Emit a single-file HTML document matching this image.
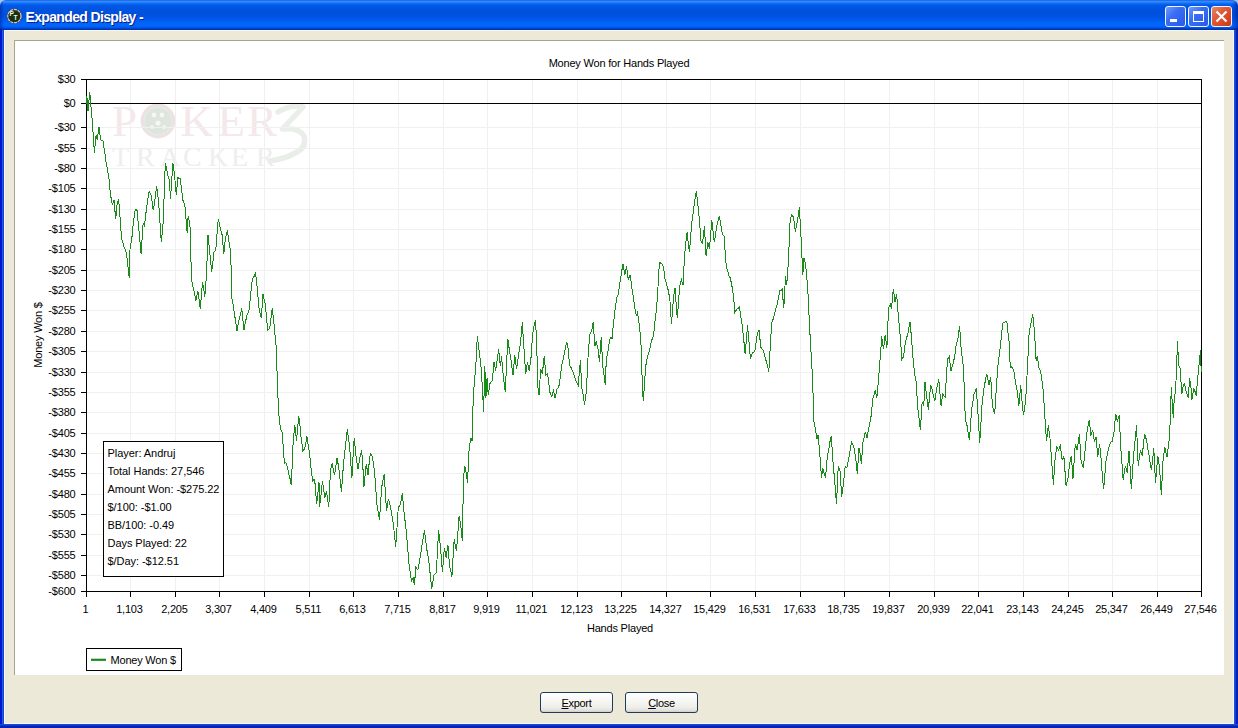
<!DOCTYPE html>
<html><head><meta charset="utf-8"><style>
html,body{margin:0;padding:0}
body{width:1238px;height:728px;overflow:hidden;position:relative;background:#ECE9D8;font-family:"Liberation Sans",sans-serif}
.abs{position:absolute}
#title{left:0;top:0;width:1238px;height:30px;border-radius:6px 6px 0 0;
background:linear-gradient(#0a49d6 0px,#3d8ffc 1px,#2b86ff 2px,#0d6ff6 3.5px,#005ae8 5px,#0054e0 9px,#0050dc 15px,#0058ea 19px,#0064f8 23px,#0066fb 26px,#0058ea 27.5px,#0042cc 28.5px,#00309e 30px)}
#bl{left:0;top:30px;width:4px;height:698px;background:linear-gradient(90deg,#0019cf 0,#0019cf 2px,#1e5bf5 2px,#1e5bf5 3px,#1747c4 3px)}
#br{left:1234px;top:30px;width:4px;height:698px;background:linear-gradient(90deg,#1a52e6 0,#1a52e6 1px,#0c40d8 1px,#0c40d8 2px,#0624b0 2px)}
#bb{left:0;top:724px;width:1238px;height:4px;background:linear-gradient(#1a48dc 0,#1a48dc 1px,#0a38cc 1px,#0a38cc 2px,#0624b0 2px)}
#hl{left:4px;top:30px;width:1230px;height:1px;background:#f6f7fc}
#panel{left:14px;top:40px;width:1210px;height:635px;background:#fff;box-shadow:inset 1px 1px 0 #a6a397}
#ttext{left:25.5px;top:9px;color:#fff;font-weight:bold;font-size:14px;letter-spacing:-0.65px;text-shadow:1px 1px 0 #0a1e8c;white-space:nowrap}
.tb{top:6px;width:21px;height:21px;box-sizing:border-box;border:1px solid #eef6ff;border-radius:3px}
#bmin{left:1165px;background:linear-gradient(135deg,#6f9cff 0%,#3a6cf4 40%,#2a5ae6 100%)}
#bmax{left:1188px;background:linear-gradient(135deg,#6f9cff 0%,#3a6cf4 40%,#2a5ae6 100%)}
#bcls{left:1211px;background:linear-gradient(135deg,#e8866a 0%,#e05a36 40%,#d84424 75%,#c23a1c 100%)}
.lbl text, text.lbl{font-family:"Liberation Sans",sans-serif;font-size:11px;fill:#000;letter-spacing:-0.2px}
.info text{letter-spacing:-0.05px}
.btn{top:692px;width:73px;height:21px;box-sizing:border-box;border:1px solid #1f3a5c;border-radius:3px;letter-spacing:-0.3px;
background:linear-gradient(#ffffff 0%,#f7f7f4 40%,#efeee9 75%,#e2e0d8 92%,#d0cdc3 100%);font-size:11px;text-align:center;line-height:21px;color:#000}
.btn u{text-decoration:underline;text-underline-offset:1px}
</style></head><body>
<div class="abs" style="left:0;top:0;width:1238px;height:8px;background:#aac0ee"></div><div id="title" class="abs"></div><div class="abs" style="left:0;top:0;width:1238px;height:30px;border-radius:6px 6px 0 0;background:linear-gradient(90deg,rgba(0,20,140,.45) 0,rgba(0,20,140,0) 4px,rgba(0,20,140,0) 1232px,rgba(0,20,140,.55) 1238px)"></div>
<div id="bl" class="abs"></div><div id="br" class="abs"></div><div id="bb" class="abs"></div>
<div id="hl" class="abs"></div><div class="abs" style="left:4px;top:30px;width:1px;height:694px;background:#f6f7fc"></div><div class="abs" style="left:1233px;top:30px;width:1px;height:694px;background:#f6f7fc"></div><div class="abs" style="left:4px;top:723px;width:1230px;height:1px;background:#f6f7fc"></div>
<div id="panel" class="abs"></div>
<svg class="abs" style="left:6px;top:8px" width="17" height="17" viewBox="0 0 17 17">
<circle cx="8.4" cy="8.1" r="7.4" fill="#3a3a30" />
<circle cx="8.4" cy="8.1" r="6.6" fill="none" stroke="#cfc6ba" stroke-width="1.3" stroke-dasharray="3 0.8"/>
<circle cx="8.4" cy="8.1" r="5.7" fill="#173012"/>
<text x="3.6" y="8.3" style="font-family:'Liberation Sans';font-weight:bold;font-size:6.6px;fill:#f4f4e4">P</text>
<text x="7.6" y="12.3" style="font-family:'Liberation Sans';font-weight:bold;font-size:6.6px;fill:#f4f4e4">T</text>
</svg>
<div id="ttext" class="abs">Expanded Display -</div>
<div id="bmin" class="abs tb"><div class="abs" style="left:4px;top:12px;width:7px;height:3px;background:#fff"></div></div>
<div id="bmax" class="abs tb"><div class="abs" style="left:4px;top:4px;width:11px;height:11px;box-sizing:border-box;border:1px solid #fff;border-top-width:3px"></div></div>
<div id="bcls" class="abs tb"><svg class="abs" style="left:0;top:0" width="19" height="19"><path d="M4.5 4.5L14.5 14.5M14.5 4.5L4.5 14.5" stroke="#fff" stroke-width="2.2"/></svg></div>
<svg class="abs" style="left:0;top:0" width="1238" height="728">
<g class="wm">
<text x="112" y="136" style="font-family:'Liberation Serif';font-size:45px;fill:#f5e8ea">P</text>
<circle cx="158" cy="121" r="16.2" fill="#e3e9e3" stroke="#f0e0e3" stroke-width="2.4"/>
<circle cx="158" cy="121" r="12.8" fill="#dde5dd"/>
<circle cx="154" cy="115" r="2.4" fill="#f4f7f4"/><circle cx="162" cy="115" r="2.4" fill="#f4f7f4"/><circle cx="158" cy="123" r="2.6" fill="#f4f7f4"/><circle cx="152" cy="127" r="1.9" fill="#f4f7f4"/><circle cx="164" cy="127" r="1.9" fill="#f4f7f4"/>
<text x="180.5" y="136" style="font-family:'Liberation Serif';font-size:45px;fill:#f5e8ea">K</text>
<text x="217.5" y="136" style="font-family:'Liberation Serif';font-size:45px;fill:#f5e8ea">E</text>
<text x="247" y="136" style="font-family:'Liberation Serif';font-size:45px;fill:#f5e8ea">R</text>
<g style="font-family:'Liberation Serif';font-size:28px;fill:#eeeeee">
<text x="112" y="166">T</text><text x="136" y="166">R</text><text x="160" y="166">A</text><text x="183" y="166">C</text><text x="208" y="166">K</text><text x="231" y="166">E</text><text x="256" y="166">R</text>
</g>
<path d="M278 112 Q291 104 303 107 L282.5 129 Q299 127 304 136 Q307 147 297 152 Q285 159 270 161" fill="none" stroke="#e9eee9" stroke-width="5.5" stroke-linecap="round" stroke-linejoin="round"/>
</g>
<path d="M130.5 80V591M175.5 80V591M219.5 80V591M264.5 80V591M309.5 80V591M353.5 80V591M398.5 80V591M443.5 80V591M487.5 80V591M532.5 80V591M577.5 80V591M621.5 80V591M666.5 80V591M710.5 80V591M755.5 80V591M800.5 80V591M844.5 80V591M889.5 80V591M934.5 80V591M978.5 80V591M1023.5 80V591M1068.5 80V591M1112.5 80V591M1157.5 80V591M87 127.5H1201M87 148.5H1201M87 168.5H1201M87 188.5H1201M87 209.5H1201M87 229.5H1201M87 249.5H1201M87 270.5H1201M87 290.5H1201M87 310.5H1201M87 331.5H1201M87 351.5H1201M87 372.5H1201M87 392.5H1201M87 412.5H1201M87 433.5H1201M87 453.5H1201M87 473.5H1201M87 494.5H1201M87 514.5H1201M87 534.5H1201M87 555.5H1201M87 575.5H1201" stroke="#f0f0f0" stroke-width="1" fill="none"/>
<path d="M87 103.5H1201" stroke="#000" stroke-width="1"/>
<path d="M86.5 79V592M86 79.5H1202M1201.5 79V592M86 591.5H1202" stroke="#000" stroke-width="1" fill="none"/>
<path d="M81 79.5H86M81 103.5H86M81 127.5H86M81 148.5H86M81 168.5H86M81 188.5H86M81 209.5H86M81 229.5H86M81 249.5H86M81 270.5H86M81 290.5H86M81 310.5H86M81 331.5H86M81 351.5H86M81 372.5H86M81 392.5H86M81 412.5H86M81 433.5H86M81 453.5H86M81 473.5H86M81 494.5H86M81 514.5H86M81 534.5H86M81 555.5H86M81 575.5H86M81 591.5H86" stroke="#000" stroke-width="1"/>
<path d="M86.5 592V597M130.5 592V597M175.5 592V597M219.5 592V597M264.5 592V597M309.5 592V597M353.5 592V597M398.5 592V597M443.5 592V597M487.5 592V597M532.5 592V597M577.5 592V597M621.5 592V597M666.5 592V597M710.5 592V597M755.5 592V597M800.5 592V597M844.5 592V597M889.5 592V597M934.5 592V597M978.5 592V597M1023.5 592V597M1068.5 592V597M1112.5 592V597M1157.5 592V597M1201.5 592V597" stroke="#000" stroke-width="1"/>
<g class="lbl"><text x="75.5" y="83.3" text-anchor="end">$30</text><text x="75.5" y="107.3" text-anchor="end">$0</text><text x="75.5" y="131.3" text-anchor="end">-$30</text><text x="75.5" y="152.3" text-anchor="end">-$55</text><text x="75.5" y="172.3" text-anchor="end">-$80</text><text x="75.5" y="192.3" text-anchor="end">-$105</text><text x="75.5" y="213.3" text-anchor="end">-$130</text><text x="75.5" y="233.3" text-anchor="end">-$155</text><text x="75.5" y="253.3" text-anchor="end">-$180</text><text x="75.5" y="274.3" text-anchor="end">-$205</text><text x="75.5" y="294.3" text-anchor="end">-$230</text><text x="75.5" y="314.3" text-anchor="end">-$255</text><text x="75.5" y="335.3" text-anchor="end">-$280</text><text x="75.5" y="355.3" text-anchor="end">-$305</text><text x="75.5" y="376.3" text-anchor="end">-$330</text><text x="75.5" y="396.3" text-anchor="end">-$355</text><text x="75.5" y="416.3" text-anchor="end">-$380</text><text x="75.5" y="437.3" text-anchor="end">-$405</text><text x="75.5" y="457.3" text-anchor="end">-$430</text><text x="75.5" y="477.3" text-anchor="end">-$455</text><text x="75.5" y="498.3" text-anchor="end">-$480</text><text x="75.5" y="518.3" text-anchor="end">-$505</text><text x="75.5" y="538.3" text-anchor="end">-$530</text><text x="75.5" y="559.3" text-anchor="end">-$555</text><text x="75.5" y="579.3" text-anchor="end">-$580</text><text x="75.5" y="595.3" text-anchor="end">-$600</text></g>
<g class="lbl"><text x="85.4" y="612.5" text-anchor="middle">1</text><text x="129.4" y="612.5" text-anchor="middle">1,103</text><text x="174.4" y="612.5" text-anchor="middle">2,205</text><text x="218.4" y="612.5" text-anchor="middle">3,307</text><text x="263.4" y="612.5" text-anchor="middle">4,409</text><text x="308.4" y="612.5" text-anchor="middle">5,511</text><text x="352.4" y="612.5" text-anchor="middle">6,613</text><text x="397.4" y="612.5" text-anchor="middle">7,715</text><text x="442.4" y="612.5" text-anchor="middle">8,817</text><text x="486.4" y="612.5" text-anchor="middle">9,919</text><text x="531.4" y="612.5" text-anchor="middle">11,021</text><text x="576.4" y="612.5" text-anchor="middle">12,123</text><text x="620.4" y="612.5" text-anchor="middle">13,225</text><text x="665.4" y="612.5" text-anchor="middle">14,327</text><text x="709.4" y="612.5" text-anchor="middle">15,429</text><text x="754.4" y="612.5" text-anchor="middle">16,531</text><text x="799.4" y="612.5" text-anchor="middle">17,633</text><text x="843.4" y="612.5" text-anchor="middle">18,735</text><text x="888.4" y="612.5" text-anchor="middle">19,837</text><text x="933.4" y="612.5" text-anchor="middle">20,939</text><text x="977.4" y="612.5" text-anchor="middle">22,041</text><text x="1022.4" y="612.5" text-anchor="middle">23,143</text><text x="1067.4" y="612.5" text-anchor="middle">24,245</text><text x="1111.4" y="612.5" text-anchor="middle">25,347</text><text x="1156.4" y="612.5" text-anchor="middle">26,449</text><text x="1200.4" y="612.5" text-anchor="middle">27,546</text></g>
<path d="M86.3 103.7 86.9 96.5 88 111 89.8 92.2 90.9 105.2 92.6 125.4 94.4 152.7 96.1 135.4 97.3 139.8 99 126.8 100.7 139.8 101.8 140.2 103 141.2 104.8 152.7 105.9 161.4 107.3 168.5 108.8 177.2 110.5 194.5 112.2 204.6 114 200.3 115.7 219 117.2 203.2 118.6 198.9 120.3 220.5 121.5 237.8 123 243.2 124.4 247.9 125.6 250.5 126.7 255.1 128 266.7 129.3 278.1 130.1 246.4 131.6 240.7 132.6 230.3 133.6 220.5 135.3 209 137 210.4 138.8 229.1 139.9 240.3 141.1 253.6 142.1 238.5 143.1 223.4 144.5 226.3 145.7 215.1 146.8 206.1 147.9 198.7 149.1 191.7 150.9 194.5 152.1 201.4 153.2 210.4 154.9 200.3 156.6 185.9 157.8 195 158.9 206.1 160.1 223.9 161.3 242.1 162.3 232.1 163.3 220.5 164.3 190.7 165.3 162.8 166.4 167.9 167.6 174.4 169.3 180.1 170.5 198.9 171.7 181.2 172.8 162.8 174.5 174.4 176.2 194.5 178 177.2 179.2 178.6 180.3 178.7 181.6 189.6 182.9 200.2 184.1 203.6 185.2 207.4 186.2 221.5 187.2 233.3 188.1 216 189.1 220.7 190.1 227.6 191.5 279.5 192.6 285.8 193.7 289.8 194.8 294.8 195.9 301.1 196.9 295.1 197.9 291 199.1 299.6 200.2 309.1 201.3 296.5 202.5 282.3 203.7 288.7 204.8 296.7 206.5 275.1 208 234.8 209 245.1 210 255 211.7 272.2 212.8 262.5 214 252.1 215.7 250.6 217 234.4 218.3 218.9 219.4 224.1 220.4 229 222.1 234.8 223.8 253.5 225.5 237.7 227.3 230.4 229 242 230.7 252.1 231.9 298.2 233.1 304.4 234.2 312.6 235.6 320.9 237.1 331.3 238.2 324.1 239.4 318.4 240.6 313.8 241.7 308.3 242.8 318.9 244 329.9 245.4 322.3 246.9 315.5 248.1 312.8 249.2 309.7 250.6 295.2 252.1 280.9 253.2 277.5 254.4 275.8 255.5 272.2 257.3 288.1 258.3 300.1 259.3 311.2 260.3 314.2 261.3 318.4 263 293.9 264.1 299.1 265.3 304 266.5 317 267.6 329.9 268.8 329.2 269.9 327 271 318.2 272.2 308.3 273.4 318.6 274.6 329.9 275.6 341.2 276.6 350.1 277.2 380 278.6 411.7 280.4 429 282.1 431.9 283.2 446.8 284.4 463.6 285.9 462.2 286.9 465.6 287.9 469.4 289 475.3 290.2 479.1 291.3 485.2 293.1 443.4 294.8 424.7 296.5 440.5 297.6 428.2 298.8 416 300 425.7 301.1 437.7 302.9 450.6 304.6 449.2 305.8 443.1 306.9 436.2 307.9 443.3 308.9 449.2 310.2 459.9 311.4 471.2 312.7 480.9 313.7 479.9 314.7 479.5 315.7 492.2 316.7 504 317.9 493.4 319 482.3 319.6 506.8 321.1 494 322.5 480.9 323.6 489.4 324.8 498.2 326.5 491 327.6 499.7 328.8 506.8 330.5 469.4 332.3 463.6 333.5 470.4 334.6 475.1 335.8 466.4 336.9 457.8 338.6 466.5 340.1 479.8 341.5 492.4 342.6 475.5 343.8 460.7 345 450.6 346.1 439.9 347.3 429 348.5 438.8 349.6 446.3 350.8 462.9 351.9 478 353 457.3 354.2 437.7 355.9 455 356.9 461.9 357.9 469.4 358.9 464 359.9 457.8 361.7 450.6 362.9 467.5 364 486.7 365.1 475.1 366.3 463.6 368 475.1 369.1 463.5 370.3 453.5 371.5 454.7 372.6 457.8 373.8 466.1 374.9 476.6 376 492.3 377.2 506.8 378.4 512.4 379.5 519.8 380.6 502.6 381.8 486.7 383 479.9 384.2 473.7 385.4 493.3 386.5 511.2 388.2 499.6 389.4 502.2 390.5 506.8 391.9 515.3 393.4 524.1 394.5 535.5 395.7 546.6 397 527.6 398.3 506.8 399.3 506.1 400.3 504 401.3 499.4 402.3 493 404 511.7 405.1 521.3 406.3 531.9 407.8 549 409.2 566.5 410.4 573.4 411.5 580.9 413.3 578 414.4 585.2 415.9 566.5 416.9 568.8 417.9 569.4 419.6 560.7 420.6 555.3 421.6 547.8 423.1 538.3 424.5 530.5 425.5 538.4 426.5 547.8 427.6 553.6 428.8 560.7 430.2 574.2 431.7 589 432.9 582 434 575.1 435.1 573.9 436.3 572.3 437.5 550.8 438.6 530.5 440.4 546.3 441.4 558.1 442.4 572.3 443.4 559.9 444.4 547.8 446.1 557.8 447.9 544.9 449.6 566.5 450.8 571.2 451.9 576.6 453 558 454.2 539.1 455.4 545.9 456.5 550.6 457.8 533.8 459.1 516 460.5 523.3 462.3 540.5 463.5 478.7 464.6 465.8 466.3 473 467.5 483 469.2 447 471 438.4 472.1 441.2 473.3 395.1 475 374.9 476.1 360.5 477.3 336 479 350.4 480.8 363.4 482.5 389.4 483.6 412.4 484.8 366.3 485.9 398 487.1 377.8 488.2 395.1 490 383.6 491.1 382.2 492.3 380.7 494 362 495.7 370.6 497.5 357.7 498.6 349 500.4 366.3 501.5 356.2 503.2 375 504.2 383.9 505.3 392.2 506.7 360.5 507.9 338.9 509.6 351.9 511.3 362 513 375 514.8 354.8 516.5 369.2 517.6 361.7 518.8 353.3 520.5 343.2 522.3 322.5 524 349 525.7 373.5 527.5 362 529.2 370.6 530.9 359.1 532.6 334.6 534 326.3 535.5 320.2 536.7 343.2 537.8 386.5 539 395.1 540.7 369.2 542.4 373.5 544.2 356.2 545.9 375 547.6 373.5 548.8 383.8 549.9 392.2 551.7 396.6 553.4 390.8 555.1 398 556.9 389.4 558 387.9 559.2 385 560.4 376.5 561.5 366.3 562.6 362 563.8 356.2 565.2 348.7 566.7 341.8 568.4 350.4 569.5 364.9 571 367.5 572.4 370.6 573.8 374 575.3 379.3 576.8 382.5 578.2 385 579.4 371.7 580.5 360.5 581.6 386.5 583.4 396.6 584.5 405.2 586.3 392.2 588 357.7 589.7 334.6 591.4 331.7 593.2 322.5 594.9 346.1 596.1 341.8 597.8 347.6 599.5 362 601.2 337.5 602.9 367.4 604 375 605.2 384.7 606.3 360.2 608.1 350.1 609.2 342.9 610.4 337.1 612.1 338.5 613.2 326.2 614.4 315.5 615.5 306.5 616.7 298.2 618.4 293.9 620.2 280.9 621.7 271.2 623.1 263.6 624.8 275.1 626.5 266.5 628.2 279.5 630 275.1 631.1 281.9 632.3 291 633.5 298.1 634.6 306.8 636.3 315.5 637.5 312.6 639.2 324.1 640.9 341.4 642.3 384 643.2 400.5 644.5 385 645.5 367.4 646.7 360.6 647.9 355.8 649.6 350.1 651.3 341.4 652.5 338.2 653.6 335.7 655 321.6 656.5 309.7 658 286.8 659.4 262.2 660.5 263.1 661.7 263.6 663.4 266.5 665.1 279.5 666.5 283.7 668 289.5 669.8 298.2 671.5 324.1 672.6 309.1 673.8 295.3 675 288.1 676.1 302.9 677.3 318.4 678.5 302.2 679.6 286.7 681.3 279.5 683 285.2 684.1 264.8 685.3 246.3 687.1 231.9 688.2 242.8 689.4 252.1 690.5 238.8 691.7 223.2 692.9 214.5 694 205.9 695.1 198.7 696.3 191.5 697.5 200.6 698.6 211.7 699.8 225.1 700.9 240.5 702.6 243.4 704.4 226.1 706.1 256.4 707.8 242 709.5 249.2 710.6 234.4 711.8 220.4 713 230.6 714.2 242 715.4 235.6 716.5 227.6 717.9 221 719.3 216 720.5 222.1 721.6 230.4 722.8 234.4 724 236.2 725.1 251.4 726.3 266.5 727.5 270 728.6 275.1 730.3 278 731.5 283.9 732.6 289.5 733.8 299.9 734.9 312.6 736 310.5 737.2 308.3 738.4 308.3 739.5 306.8 740.9 317 742.3 325.5 743.8 340.4 745.2 354.3 746.4 339.3 747.5 325.5 749 341.7 750.4 358.6 751.5 355 752.7 352.9 753.9 352 755 350 756.1 342.1 757.3 334.1 759 329.8 760.8 347.1 762 349.1 763.1 350 764.5 354.6 765.9 360.1 767.3 365.2 768.8 371.6 770.2 347.8 771.7 322.6 772.9 319.9 774 315.8 775.2 311.1 776.9 305.3 778.3 298.8 779.8 290.9 781 290.7 782.1 289.5 783.8 308.2 785.5 276.5 786.7 285.1 788.4 262.1 790.2 218.8 791.9 214.5 793.6 217.4 795.3 231.8 796.5 225.9 797.7 218.8 799.4 207.3 801.1 239 802.8 275 804 257.7 805.7 265 806.9 278.7 808 293.8 809.1 316.9 810.3 339.9 811.5 359.8 812.6 380.3 814 421.9 815.2 427.7 816.9 439.2 818.1 434.9 819.8 453.6 821.5 478.1 822.7 468 823.8 472.3 825.6 478.1 826.7 462.2 827.9 453.9 829 447.8 830.1 440.9 831.3 436.3 833 462.2 834.8 482.4 836.5 504 838.2 466.6 840 470.9 841.7 496.8 843.4 483.9 845.2 466.6 846.9 468 848 461.7 849.2 456.5 850.4 448.7 851.5 442.1 852.6 444.7 853.8 446.4 855.5 456.5 857.3 473.8 859 447.8 860.1 453.6 861.3 463.7 863 442.1 864.1 438.1 865.3 432 867.1 437.7 868.8 427.7 870 421.8 871.1 416.1 872.8 398.8 874 395.5 875.1 390.2 876.9 397.4 878.6 378.6 879.6 365.7 880.7 351.5 881.7 336.3 883.5 349.3 885.2 334.9 886.9 347.8 888.6 307.5 890.4 304.6 891.5 308.9 893.3 288.7 895 301.7 896.7 294.5 897.9 310.4 899 323 900.2 336.3 901.9 359.4 903.6 356.5 905.4 342.1 906.5 337.8 907.7 334.9 908.9 327.7 910 321.9 911.1 333.4 912.9 356.5 914.6 373.8 916.3 382.4 917.5 405.5 918.6 414.1 920.4 430 922.1 402.6 923.8 405.5 925 382.4 926.7 396.8 928.4 409.8 929.5 396.8 930.7 385.3 931.9 388.9 933 394 934.8 401.2 936.5 389.6 937.6 384.8 938.8 379.5 940 393.5 941.1 405.5 942.8 394 944 396.1 945.1 396.8 946.3 378.1 947.5 359.4 949.2 356.5 950.9 370.9 952.3 366.2 953.8 360.8 955 353.6 956.1 345 957.8 339.2 959.6 326.2 961.3 350.7 962.5 359.1 963.6 369.5 965.3 419.9 967.1 425.7 968.2 433.3 969.4 440.1 970.5 425.2 971.7 408.4 972.9 401.9 974 394 975.1 391.7 976.3 388.2 978 414.1 979.7 443 980.9 424.2 982 405.5 983.2 394.6 984.4 385.3 985.5 380.2 986.7 373.8 987.9 379.1 989 385.3 990.7 376.7 992.4 405.5 993.5 410.5 994.7 414.1 996.5 385.3 998.2 362.2 999.4 354.7 1000.5 345 1001.6 333.9 1002.8 323.3 1004 322.5 1005.1 321.9 1006.8 321.3 1008 332.8 1009.1 342.1 1010.3 368 1012 366.6 1013.8 370.9 1015.5 382.4 1017.2 391.1 1018.9 405.5 1020.7 385.3 1021.7 398 1023.5 415.3 1024.7 407.2 1025.8 398 1027.5 366.3 1029.2 331.7 1031 323.1 1032.7 314.4 1034.4 330.3 1036.1 360.5 1037.3 356.2 1039 367.7 1040.2 370.6 1041.3 375 1043.1 389.4 1044.8 415.3 1046.5 441.2 1048.3 425.4 1050 438.4 1051.7 461.4 1053.4 484.5 1055.2 457.1 1056.9 447 1058.6 449.9 1060.4 445.6 1062.1 460 1063.8 455.7 1064.9 469.9 1066.1 485.9 1067.9 478.7 1069.6 464.3 1071.3 455.7 1073 478.7 1074.2 460.6 1075.3 444.1 1077.1 449.9 1078.2 442.9 1079.4 434 1081.1 461.4 1082.2 465 1083.4 467.2 1085.1 449.9 1086.9 432.6 1088.1 425.3 1089.2 419.6 1090.9 435.5 1092.6 429.7 1094.4 441.2 1096.1 436.9 1097.8 457.1 1099.6 444.1 1101.3 461.4 1102.4 475.9 1103.6 488.8 1104.8 476.3 1105.9 461.4 1107.1 456 1108.2 449.9 1109.3 445.9 1110.5 442.7 1112.2 441.2 1114 432.6 1115.7 413.9 1117.4 421.1 1119.2 415.3 1120.9 449.9 1122.1 465.2 1123.2 480.2 1124.3 472.1 1125.5 465.8 1127.2 473 1129 451.3 1130.2 468.9 1131.3 488.8 1132.4 473.4 1133.6 455.7 1135 440.9 1136.5 425.4 1138.2 465.8 1139.3 457.9 1140.5 449.9 1142.2 455.7 1143.3 445.9 1144.5 434 1145.7 437.4 1146.8 441.2 1147.9 449.3 1149.1 455.7 1150.3 463.7 1151.5 470.1 1152.7 458.6 1153.8 448.5 1155.5 483 1156.7 468.8 1157.8 455.7 1159.5 467.2 1161.3 494.6 1163 461.4 1164.7 447 1165.8 451.6 1167 457.1 1168.2 447.1 1169.3 438.4 1170.3 420 1170.6 405.1 1171.4 387.3 1172.2 402.4 1173.3 417.5 1174.2 399.6 1175.5 391.4 1176.4 372.2 1177.5 341.3 1178.3 357.1 1179.1 366.7 1180.2 368.1 1181 381.8 1181.9 394.1 1182.7 388.7 1183.5 384.5 1184.6 383.2 1185.7 390 1187.1 394.1 1188.4 398.3 1189.5 377.7 1190.4 383.2 1191.2 390 1192 399.6 1192.8 394.1 1193.9 388.7 1195 391.4 1196.1 395.5 1197.2 384.5 1198.3 372.2 1199.4 361.2 1200.3 353 1200.8 350.2 1201.1 372.2" fill="none" stroke="#1a8a1a" stroke-width="1" stroke-linejoin="miter" shape-rendering="crispEdges"/>
<rect x="103.5" y="441.5" width="120" height="135" fill="#fff" stroke="#000" stroke-width="1"/>
<g class="lbl info"><text x="107.5" y="457.3">Player: Andruj</text><text x="107.5" y="475.2">Total Hands: 27,546</text><text x="107.5" y="493.2">Amount Won: -$275.22</text><text x="107.5" y="511.1">$/100: -$1.00</text><text x="107.5" y="529.1">BB/100: -0.49</text><text x="107.5" y="547.0">Days Played: 22</text><text x="107.5" y="564.9">$/Day: -$12.51</text></g>
<text class="lbl" x="619" y="66.7" text-anchor="middle">Money Won for Hands Played</text>
<text class="lbl" x="620" y="631.8" text-anchor="middle">Hands Played</text>
<text class="lbl" transform="translate(42.3 335) rotate(-90)" x="0" y="0" text-anchor="middle">Money Won $</text>
<rect x="86.5" y="648.5" width="95" height="22" fill="#fff" stroke="#000" stroke-width="1"/>
<path d="M91 659.8H106" stroke="#1d8a1d" stroke-width="2.2"/>
<text class="lbl" x="110.5" y="664">Money Won $</text>
</svg>
<div class="abs btn" style="left:540px"><u>E</u>xport</div>
<div class="abs btn" style="left:625px"><u>C</u>lose</div>
</body></html>
